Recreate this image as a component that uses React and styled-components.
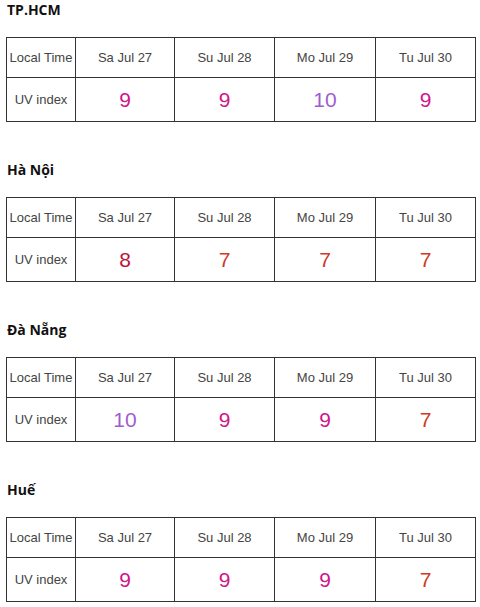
import React from "react";
import styled, { createGlobalStyle } from "styled-components";

// ─── Data ─────────────────────────────────────────────────────────────────────

const days = ["Sa Jul 27", "Su Jul 28", "Mo Jul 29", "Tu Jul 30"];

const cities = [
  { name: "TP.HCM", uv: [9, 9, 10, 9] },
  { name: "Hà Nội", uv: [8, 7, 7, 7] },
  { name: "Đà Nẵng", uv: [10, 9, 9, 7] },
  { name: "Huế", uv: [9, 9, 9, 7] },
];

const uvColor = (v) => {
  if (v >= 10) return "#a05dd0";
  if (v === 9) return "#cf168c";
  if (v === 8) return "#bd133d";
  return "#d0392b";
};

// ─── Styles ───────────────────────────────────────────────────────────────────

const GlobalStyle = createGlobalStyle`
  html, body {
    margin: 0;
    padding: 0;
    background: #ffffff;
  }
`;

const Page = styled.div`
  width: 480px;
  padding: 0 0 0 6px;
  box-sizing: border-box;
  font-family: "Liberation Sans", Arial, sans-serif;
`;

const Section = styled.section`
  margin-bottom: 38px;

  &:last-child {
    margin-bottom: 0;
  }
`;

const CityTitle = styled.h2`
  margin: 0 0 17px 1px;
  height: 20px;
  font-family: "Open Sans", "Noto Sans", sans-serif;
  font-size: 14px;
  font-weight: 700;
  line-height: 20px;
  color: #111;
`;

const Grid = styled.div`
  display: grid;
  grid-template-columns: 69px 99px 100px 101px 100px;
  grid-template-rows: 40px 44px;
  width: 470px;
  border-top: 1px solid #333;
  border-left: 1px solid #333;
  box-sizing: border-box;
`;

const Cell = styled.div`
  display: flex;
  align-items: center;
  justify-content: center;
  border-right: 1px solid #333;
  border-bottom: 1px solid #333;
  box-sizing: border-box;
  font-size: 13px;
  color: #444;
  white-space: nowrap;
  overflow: hidden;
`;

const Value = styled(Cell)`
  font-size: 21px;
  padding-top: 1px;
  color: ${({ $color }) => $color};
`;

// ─── Component ────────────────────────────────────────────────────────────────

const App = () => (
  <>
    <GlobalStyle />
    <Page>
      {cities.map((c) => (
        <Section key={c.name}>
          <CityTitle>{c.name}</CityTitle>
          <Grid>
            <Cell>Local Time</Cell>
            {days.map((d) => (
              <Cell key={d}>{d}</Cell>
            ))}
            <Cell>UV index</Cell>
            {c.uv.map((v, i) => (
              <Value key={i} $color={uvColor(v)}>
                {v}
              </Value>
            ))}
          </Grid>
        </Section>
      ))}
    </Page>
  </>
);

export default App;
